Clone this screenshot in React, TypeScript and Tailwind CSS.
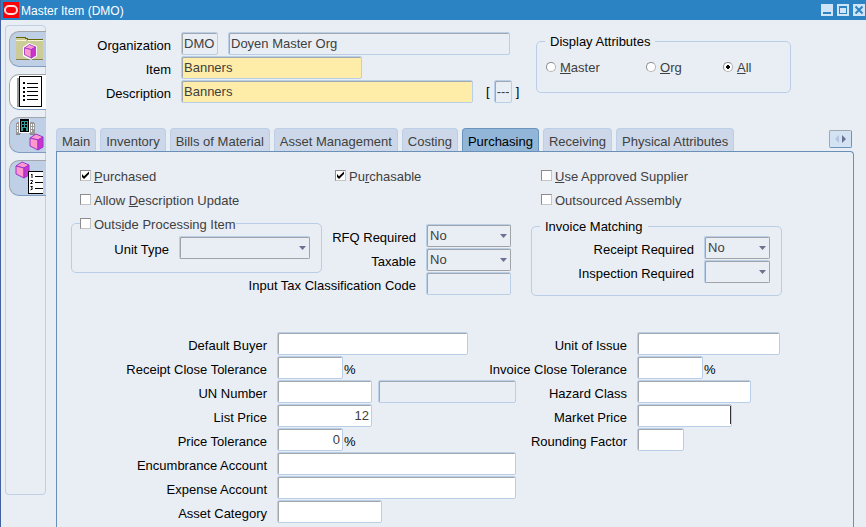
import { useState } from "react";
import type { ReactNode } from "react";
import clsx from "clsx";

type FieldProps = {
  id: string;
  width: string;
  value?: string;
  tone?: "plain" | "required" | "disabled";
  align?: "left" | "right";
  label?: string;
};

const tabs = [
  "Main",
  "Inventory",
  "Bills of Material",
  "Asset Management",
  "Costing",
  "Purchasing",
  "Receiving",
  "Physical Attributes",
];

function Field({ id, width, value = "", tone = "plain", align = "left", label }: FieldProps) {
  return (
    <input
      id={id}
      type="text"
      aria-label={label}
      defaultValue={value}
      readOnly={tone === "disabled"}
      className={clsx(
        "h-[23px] shrink-0 rounded-[2px] border border-[#b9cfe8] px-0.5 text-[#404040] shadow-[inset_1px_1px_0_#a3a8ae] outline-none",
        width,
        tone === "plain" && "bg-white",
        tone === "required" && "bg-[#feeda8]",
        tone === "disabled" && "bg-[#e9eef5]",
        align === "right" && "text-right"
      )}
    />
  );
}

function SelectField({ id, width, options }: { id: string; width: string; options: string[] }) {
  return (
    <div className={clsx("relative shrink-0", width)}>
      <select
        id={id}
        className="block h-[23px] w-full appearance-none rounded-[2px] border border-t-[#b9cfe8] border-r-[#a0a3a8] border-b-[#a0a3a8] border-l-[#b9cfe8] bg-[#e9eef5] px-[3px] text-[#404040] shadow-[inset_1px_1px_0_#a0a3a8] outline-none"
      >
        {options.map((o) => (
          <option key={o}>{o}</option>
        ))}
      </select>
      <svg className="pointer-events-none absolute top-2.5 right-1" width="7" height="4" viewBox="0 0 7 4">
        <path d="M0 0h7L3.5 4z" fill="#6d7191" />
      </svg>
    </div>
  );
}

// Label on the left, aligned to the field's edge
function Row({ id, label, labelWidth, children }: { id: string; label: string; labelWidth: string; children: ReactNode }) {
  return (
    <div className="flex items-center gap-2.5">
      <div className={clsx("flex shrink-0 justify-end pt-1 whitespace-nowrap text-black", labelWidth)}>
        <label htmlFor={id}>{label}</label>
      </div>
      {children}
    </div>
  );
}

function Check({ id, checked = false, children }: { id: string; checked?: boolean; children: ReactNode }) {
  return (
    <label htmlFor={id} className="flex items-center gap-[3px] whitespace-nowrap text-[#404040]">
      <span className="relative block size-[11px]">
        <input
          id={id}
          type="checkbox"
          defaultChecked={checked}
          className="peer block size-[11px] appearance-none border border-t-[#8c8c8c] border-r-[#c4c4c4] border-b-[#c4c4c4] border-l-[#8c8c8c] bg-white"
        />
        <svg className="pointer-events-none absolute inset-0 hidden peer-checked:block" width="11" height="11" viewBox="0 0 11 11">
          <path d="M2 4v3l2 2 5-5V1.500L4 6.200z" fill="#000" />
        </svg>
      </span>
      <span className="pt-[3px]">{children}</span>
    </label>
  );
}

function Radio({ id, checked = false, children }: { id: string; checked?: boolean; children: ReactNode }) {
  return (
    <label htmlFor={id} className="flex items-center gap-1 text-[#404040]">
      <input
        id={id}
        type="radio"
        name="display"
        defaultChecked={checked}
        className="size-2.5 appearance-none rounded-full border border-t-[#8c8c8c] border-r-[#b4b4b4] border-b-[#b4b4b4] border-l-[#8c8c8c] bg-white checked:bg-[radial-gradient(circle,#000_2px,#fff_2px)]"
      />
      <span className="pt-[3px]">{children}</span>
    </label>
  );
}

function Group({ className, legend, children }: { className: string; legend: ReactNode; children: ReactNode }) {
  return (
    <fieldset className={clsx("rounded-[5px] border border-[#b9cde4] px-2", className)}>
      <legend className="leading-4 text-black">{legend}</legend>
      {children}
    </fieldset>
  );
}

function Cube({ x, y }: { x: number; y: number }) {
  return (
    <g transform={`translate(${x} ${y})`} stroke="#9a33cc" strokeWidth="1" strokeLinejoin="round">
      <path d="M0 4L6 0l7 3-5 3z" fill="#ff9ad0" />
      <path d="M0 4l8 2v10l-8-4z" fill="#ff99cc" />
      <path d="M8 6l5-3v10l-5 3z" fill="#cc33cc" />
    </g>
  );
}

function FolderIcon() {
  return (
    <svg width="36" height="34" viewBox="0 0 36 34">
      <g shapeRendering="crispEdges">
        <path d="M6 8h27v20H6z" fill="#cccc99" />
        <path d="M6 6h10l2 2H6z" fill="#cccc99" />
        <path d="M6 5h10v1h2v1h15v1H17V7h-2V6H6z" fill="#666600" />
        <path d="M6 8h10v1H6zM18 8h15v1H18z" fill="#f5f5dc" />
        <path d="M6 27h27v1H6z" fill="#808050" />
      </g>
      <path d="M13 15l6-4 8 3v10l-6 4-8-4z" fill="#fff" />
      <g transform="translate(14.500 12.500) scale(.85)">
        <Cube x={0} y={0} />
      </g>
    </svg>
  );
}

function ListIcon() {
  return (
    <svg width="36" height="34" viewBox="0 0 36 34" shapeRendering="crispEdges">
      <path d="M7 3h2v29H7z" fill="#999" />
      <path d="M9 1h23v31H9z" fill="#000" />
      <path d="M10 2h21v29H10z" fill="#fff" />
      <path d="M13 7h2v2h-2zM13 12h2v2h-2zM13 16h2v2h-2zM13 20h2v2h-2zM13 24h2v2h-2z" fill="#000" />
      <path d="M17 8h11v1H17zM17 12h11v1H17zM17 16h11v1H17zM17 20h11v1H17zM17 24h11v1H17z" fill="#000" />
    </svg>
  );
}

function OrgIcon() {
  return (
    <svg width="36" height="34" viewBox="0 0 36 34">
      <g shapeRendering="crispEdges">
        <path d="M7 4h4v12H6V5h1zM19 4h5v1h1v11h-6z" fill="#999" />
        <path d="M7 6h1v2H7zM7 9h1v2H7zM7 12h1v2H7zM21 6h1v2h-1zM23 6h1v2h-1zM21 9h1v2h-1zM23 9h1v2h-1zM21 12h1v2h-1z" fill="#fff" />
        <path d="M9 1h11v14H9z" fill="#fff" />
        <path d="M10 1h9v13h-9z" fill="#000" />
        <path d="M11 3h7v10h-7z" fill="#339999" />
        <path d="M12 4h2v2h-2zM15 4h2v2h-2zM12 7h2v2h-2zM15 7h2v2h-2zM13 10h3v3h-3z" fill="#000" />
        <path d="M6 16h4v1H6zM20 16h6v1h-6z" fill="#888" />
      </g>
      <Cube x={20} y={16} />
    </svg>
  );
}

function CubeListIcon() {
  return (
    <svg width="36" height="34" viewBox="0 0 36 34">
      <Cube x={6} y={1} />
      <g shapeRendering="crispEdges">
        <path d="M18 10h15v23H18z" fill="#000" />
        <path d="M19 11h14v21H19z" fill="#fff" />
        <path d="M25 15h8v1h-8zM25 21h8v1h-8zM25 27h8v1h-8z" fill="#000" />
      </g>
      <path d="M21 14l1-1v4M20.500 19.500h2v1l-2 2h2M20.500 25.500h2l-1 1.500 1 1-2 1" fill="none" stroke="#000" />
    </svg>
  );
}

const tools = [
  { name: "Open item", icon: <FolderIcon /> },
  { name: "Item list", icon: <ListIcon /> },
  { name: "Organizations", icon: <OrgIcon /> },
  { name: "Item details", icon: <CubeListIcon /> },
];

function TitleBar() {
  const button = "flex size-3 items-center justify-center bg-[#cfe5f7] text-[#2b83c3]";
  return (
    <header className="flex h-5 items-center bg-[#2b83c3] pr-px pl-0.5 text-xs text-white">
      <svg width="16" height="16" viewBox="0 0 16 16">
        <path d="M0 0h16v16H0z" fill="#fb0007" />
        <rect x="2" y="4" width="12" height="8" rx="4" fill="none" stroke="#ffdada" strokeWidth="2" />
      </svg>
      <h1 className="ml-0.5 flex-1 pt-0.5">Master Item (DMO)</h1>
      <div className="flex gap-1">
        <button aria-label="Minimize" className={button}>
          <svg width="12" height="12" viewBox="0 0 12 12">
            <path d="M2 8h8v2H2z" fill="currentColor" />
          </svg>
        </button>
        <button aria-label="Maximize" className={button}>
          <svg width="12" height="12" viewBox="0 0 12 12">
            <path d="M2 2h8v8H2zM3 4v5h6V4z" fill="currentColor" fillRule="evenodd" />
          </svg>
        </button>
        <button aria-label="Close" className={button}>
          <svg width="12" height="12" viewBox="0 0 12 12">
            <path d="M2.500 2.500l7 7M9.500 2.500l-7 7" stroke="currentColor" strokeWidth="2" />
          </svg>
        </button>
      </div>
    </header>
  );
}

export default function App() {
  const [activeTab, setActiveTab] = useState("Purchasing");
  const [activeTool, setActiveTool] = useState("Item list");

  return (
    <div className="flex min-h-screen flex-col border-l border-[#41629e] bg-[#e9eef5] font-['Liberation_Sans',Arial,sans-serif] text-[13px] leading-4">
      <TitleBar />
      <div className="flex flex-1">
        <nav className="mt-[5px] mb-8 ml-1 flex w-[41px] shrink-0 flex-col gap-[7px] rounded-[4px] border border-[#bfd0e4] pt-[5px] pl-[3px]">
          {tools.map((tool) => (
            <button
              key={tool.name}
              aria-label={tool.name}
              onClick={() => setActiveTool(tool.name)}
              className={clsx(
                "-mr-px h-9 overflow-hidden rounded-l-[10px] border border-r-0 border-t-[#a3a6ab] border-b-[#7f9dc0] border-l-[#a3a6ab]",
                activeTool === tool.name ? "bg-white" : "bg-[#bfd0e6]"
              )}
            >
              {tool.icon}
            </button>
          ))}
        </nav>

        <main className="flex flex-1 flex-col pr-3 pl-2.5">
          {/* Item header */}
          <div className="flex h-[108px] gap-[25px]">
            <div className="flex w-[455px] shrink-0 flex-col gap-px pt-3">
              <Row id="org" label="Organization" labelWidth="w-[115px]">
                <Field id="org" width="w-[37px]" value="DMO" tone="disabled" />
                <Field id="org-name" label="Organization name" width="w-[282px]" value="Doyen Master Org" tone="disabled" />
              </Row>
              <Row id="item" label="Item" labelWidth="w-[115px]">
                <Field id="item" width="w-[181px]" value="Banners" tone="required" />
              </Row>
              <Row id="description" label="Description" labelWidth="w-[115px]">
                <Field id="description" width="w-[292px]" value="Banners" tone="required" />
                <div className="flex items-center gap-1 pl-[3px] text-black">
                  <span>[</span>
                  <Field id="flex" label="Descriptive flexfield" width="w-[18px]" value="----" tone="disabled" />
                  <span>]</span>
                </div>
              </Row>
            </div>
            <Group
              className="mt-3 h-[61px] w-[255px]"
              legend={<span className="block px-[5px] pt-0.5">Display Attributes</span>}
            >
              <div className="flex pt-[7px] pl-px">
                <div className="w-[100px]">
                  <Radio id="master"><u>M</u>aster</Radio>
                </div>
                <div className="w-[77px]">
                  <Radio id="org-only"><u>O</u>rg</Radio>
                </div>
                <Radio id="all" checked><u>A</u>ll</Radio>
              </div>
            </Group>
          </div>

          {/* Tabs */}
          <div className="flex h-[23px] items-start justify-between">
            <div role="tablist" className="flex h-full gap-1">
              {tabs.map((tab) => (
                <button
                  key={tab}
                  role="tab"
                  aria-selected={activeTab === tab}
                  onClick={() => setActiveTab(tab)}
                  className={clsx(
                    "rounded-t-[4px] border border-b-0 px-[5px] pt-1 whitespace-nowrap",
                    activeTab === tab
                      ? "border-[#6a94bd] bg-[#92b6d8] text-black"
                      : "border-[#bccfe6] bg-[#ccd8e9] text-[#404040]"
                  )}
                >
                  {tab}
                </button>
              ))}
            </div>
            <button
              aria-label="Scroll tabs"
              className="mt-0.5 mr-0.5 flex h-[18px] w-[23px] items-center justify-center rounded-[2px] border border-t-[#a3a6ab] border-r-[#6a94bd] border-b-[#6a94bd] border-l-[#a3a6ab] bg-[#d3e3f4]"
            >
              <svg width="11" height="8" viewBox="0 0 11 8">
                <path d="M4 0v8L0 4z" fill="#b4c6dc" />
                <path d="M7 0v8l4-4z" fill="#6d7191" />
              </svg>
            </button>
          </div>

          <section className="flex-1 rounded-tr-[4px] border border-b-0 border-[#6a90b8] pt-[11px]">
            <div className="grid grid-cols-[255px_206px_1fr] pl-[23px]">
              <div className="flex h-6 items-center">
                <Check id="purchased" checked><u>P</u>urchased</Check>
              </div>
              <div className="flex h-6 items-center">
                <Check id="purchasable" checked>Pu<u>r</u>chasable</Check>
              </div>
              <div className="flex h-6 items-center">
                <Check id="approved"><u>U</u>se Approved Supplier</Check>
              </div>
              <div className="col-span-2 flex h-6 items-center">
                <Check id="allow-update">Allow <u>D</u>escription Update</Check>
              </div>
              <div className="flex h-6 items-center">
                <Check id="outsourced">Outsourced Assembly</Check>
              </div>
            </div>

            <div className="mt-[3px] flex items-start pl-3.5">
              <Group
                className="h-[59px] w-[251px]"
                legend={<Check id="outside">Outs<u>i</u>de Processing Item</Check>}
              >
                <div className="pt-[3px]">
                  <Row id="unit-type" label="Unit Type" labelWidth="w-[89px]">
                    <SelectField id="unit-type" width="w-[131px]" options={[""]} />
                  </Row>
                </div>
              </Group>
              <div className="flex w-[189px] flex-col items-end gap-px pt-2.5">
                <Row id="rfq" label="RFQ Required" labelWidth="w-[94px]">
                  <SelectField id="rfq" width="w-[85px]" options={["No", "Yes"]} />
                </Row>
                <Row id="taxable" label="Taxable" labelWidth="w-[94px]">
                  <SelectField id="taxable" width="w-[85px]" options={["No", "Yes"]} />
                </Row>
                <Row id="tax-code" label="Input Tax Classification Code" labelWidth="w-[94px]">
                  <Field id="tax-code" width="w-[85px]" tone="disabled" />
                </Row>
              </div>
              <Group
                className="mt-[3px] ml-5 h-[79px] w-[251px]"
                legend={<span className="block px-[5px] pt-0.5">Invoice Matching</span>}
              >
                <div className="flex flex-col gap-px pt-px">
                  <Row id="receipt-required" label="Receipt Required" labelWidth="w-[154px]">
                    <SelectField id="receipt-required" width="w-[66px]" options={["No", "Yes"]} />
                  </Row>
                  <Row id="inspection-required" label="Inspection Required" labelWidth="w-[154px]">
                    <SelectField id="inspection-required" width="w-[66px]" options={[""]} />
                  </Row>
                </div>
              </Group>
            </div>

            <div className="mt-9 flex items-start">
              <div className="flex w-[459px] flex-col gap-px">
                <Row id="buyer" label="Default Buyer" labelWidth="w-[210px]">
                  <Field id="buyer" width="w-[191px]" />
                </Row>
                <Row id="receipt-tolerance" label="Receipt Close Tolerance" labelWidth="w-[210px]">
                  <div className="flex items-center gap-px">
                    <Field id="receipt-tolerance" width="w-[66px]" />
                    <span className="pt-1">%</span>
                  </div>
                </Row>
                <Row id="un-number" label="UN Number" labelWidth="w-[210px]">
                  <div className="flex gap-1.5">
                    <Field id="un-number" width="w-[95px]" />
                    <Field id="un-name" label="UN description" width="w-[138px]" tone="disabled" />
                  </div>
                </Row>
                <Row id="list-price" label="List Price" labelWidth="w-[210px]">
                  <Field id="list-price" width="w-[95px]" value="12" align="right" />
                </Row>
                <Row id="price-tolerance" label="Price Tolerance" labelWidth="w-[210px]">
                  <div className="flex items-center gap-px">
                    <Field id="price-tolerance" width="w-[66px]" value="0" align="right" />
                    <span className="pt-1">%</span>
                  </div>
                </Row>
                <Row id="encumbrance" label="Encumbrance Account" labelWidth="w-[210px]">
                  <Field id="encumbrance" width="w-[239px]" />
                </Row>
                <Row id="expense" label="Expense Account" labelWidth="w-[210px]">
                  <Field id="expense" width="w-[239px]" />
                </Row>
                <Row id="category" label="Asset Category" labelWidth="w-[210px]">
                  <Field id="category" width="w-[105px]" />
                </Row>
              </div>
              <div className="flex flex-col gap-px">
                <Row id="unit-issue" label="Unit of Issue" labelWidth="w-[111px]">
                  <Field id="unit-issue" width="w-[143px]" />
                </Row>
                <Row id="invoice-tolerance" label="Invoice Close Tolerance" labelWidth="w-[111px]">
                  <div className="flex items-center gap-px">
                    <Field id="invoice-tolerance" width="w-[66px]" />
                    <span className="pt-1">%</span>
                  </div>
                </Row>
                <Row id="hazard" label="Hazard Class" labelWidth="w-[111px]">
                  <Field id="hazard" width="w-[114px]" />
                </Row>
                <Row id="market-price" label="Market Price" labelWidth="w-[111px]">
                  <div className="relative">
                    <Field id="market-price" width="w-[95px]" align="right" />
                    <span className="absolute top-0.5 right-px h-[18px] w-px bg-[#303030]" />
                  </div>
                </Row>
                <Row id="rounding" label="Rounding Factor" labelWidth="w-[111px]">
                  <Field id="rounding" width="w-[47px]" />
                </Row>
              </div>
            </div>
          </section>
        </main>
      </div>
    </div>
  );
}
